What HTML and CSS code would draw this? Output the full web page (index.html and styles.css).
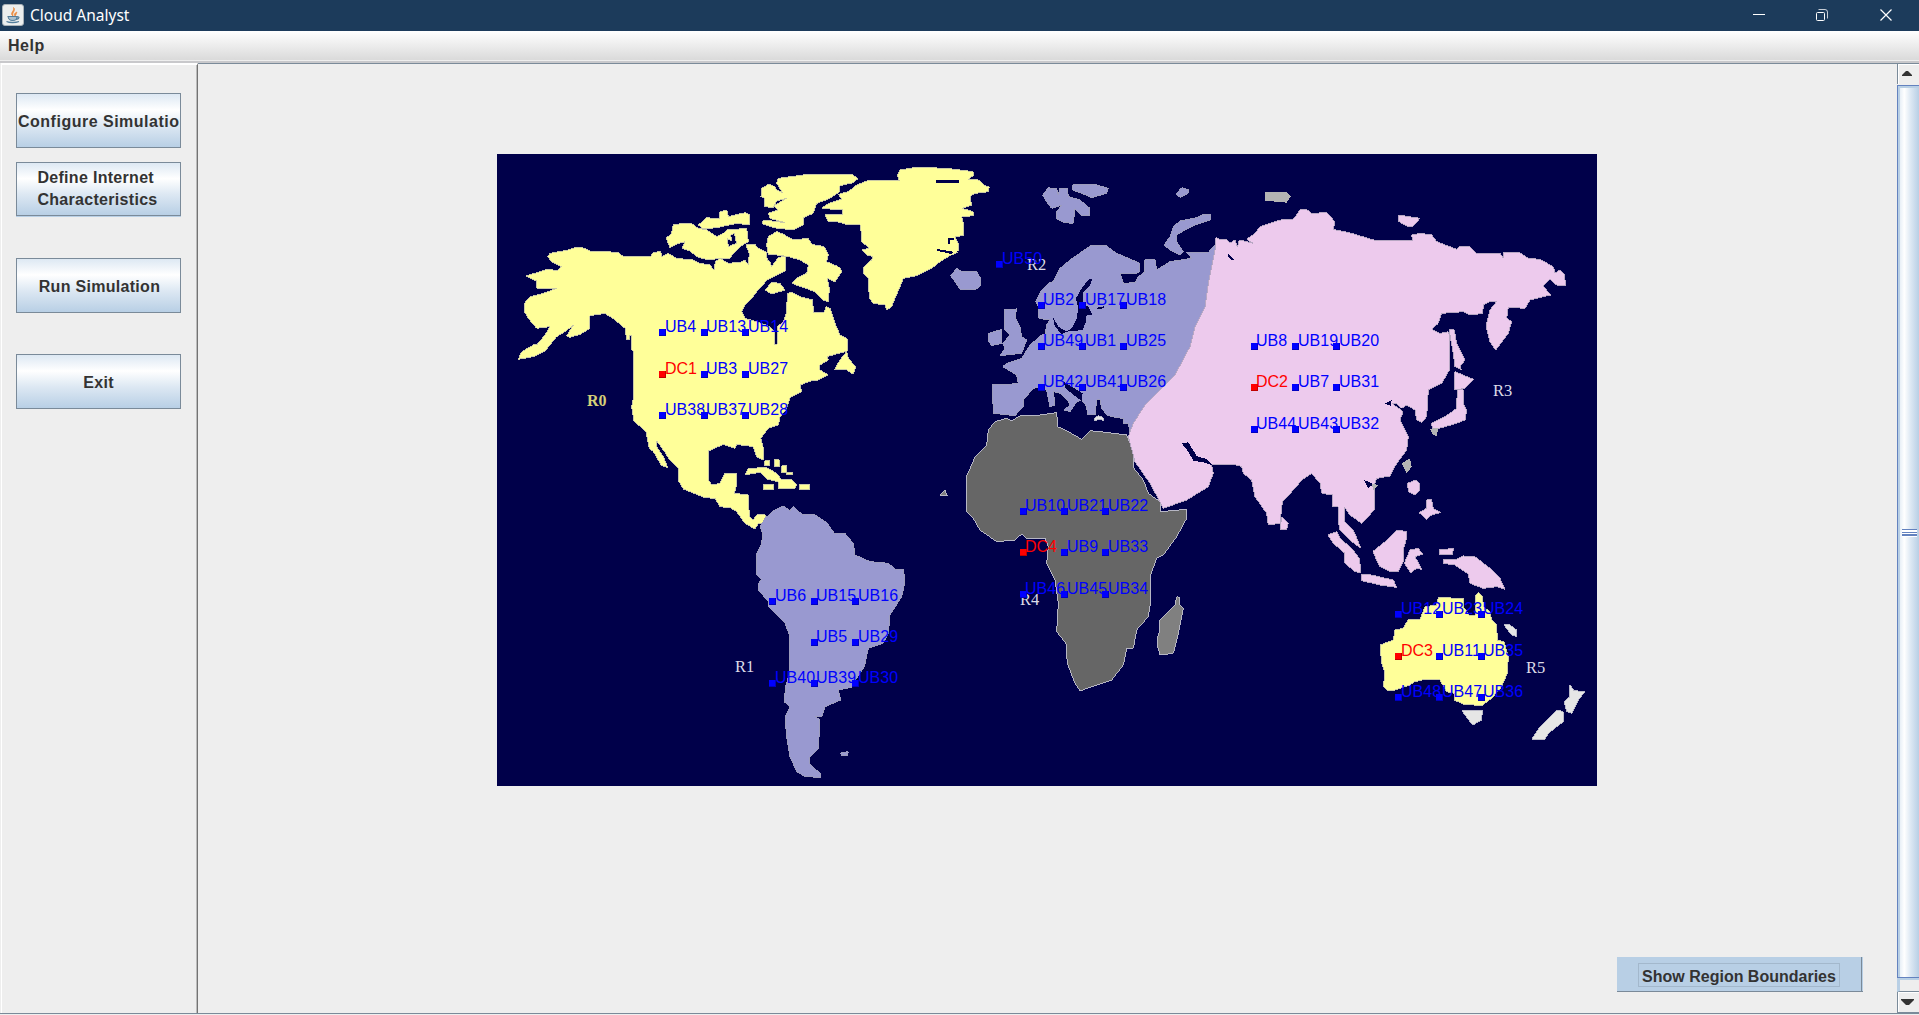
FILE: index.html
```html
<!DOCTYPE html>
<html lang="en">
<head>
<meta charset="utf-8">
<title>Cloud Analyst</title>
<link rel="stylesheet" href="styles.css">
</head>
<body>
<header class="titlebar">
  <svg class="app-icon" width="22" height="22" viewBox="0 0 22 22">
    <rect x=".5" y=".5" width="21" height="21" rx="2.5" fill="#eceeee" stroke="#a9b2b8"/>
    <path d="M11 12C7 9 13 7 11.500 3.500c3 3-2 5-.5 8.500M13 12c-1.500-2 0-3 2-4-1 1.500-.5 2.500-2 4" fill="#ef8d3c" stroke="#e8853b" stroke-width=".7"/>
    <path d="M6 12.500h9c0 3-1 4-4.500 4S6.500 15 6 12.500zM15 13c3-1 2.500 2-.5 2.500M4.500 17.500c3 1.500 9 1.500 12.500 0" fill="#a9bfce" stroke="#537d9b" stroke-width="1.100"/>
  </svg>
  <span class="title">Cloud Analyst</span>
  <svg class="window-controls" width="150" height="31" viewBox="1753 0 150 31" fill="none" stroke="#fff">
    <path d="M1753 14.500h12"/>
    <rect x="1816.500" y="12.500" width="8" height="8" rx="1"/>
    <path d="M1818.500 9.500h6.500q2.500 0 2.500 2.500v6.500" stroke-opacity=".75"/>
    <path d="M1880.500 9.500l11 11M1891.500 9.500l-11 11" stroke-width="1.200"/>
  </svg>
</header>
<nav class="menubar"><span>Help</span></nav>
<main class="workspace">
  <aside class="sidebar">
    <button class="btn">Configure Simulation</button>
    <button class="btn btn-internet"><span>Define Internet<br>Characteristics</span></button>
    <button class="btn btn-run">Run Simulation</button>
    <button class="btn btn-exit">Exit</button>
  </aside>
  <section class="canvas">
    <svg class="map" width="1100" height="632" viewBox="497 154 1100 632">
      <defs>
        <g id="ub"><rect width="7" height="7" fill="#0000c0"/><rect width="6" height="6" fill="#00f"/></g>
        <g id="dc"><rect width="7" height="7" fill="#c00000"/><rect width="6" height="6" fill="#f00"/></g>
      </defs>
      <rect x="497" y="154" width="1100" height="632" fill="#00004a"/>
      <g class="land" transform="translate(490 145) scale(.33333)">
        <!-- North America -->
        <g class="yellow">
          <path d="M173 335 180 325 235 315 262 306 285 310 300 318 385 322 398 333 480 335 492 322 512 320 515 335 535 325 560 340 610 345 630 355 660 360 672 375 676 350 690 340 715 355 750 352 765 345 775 360 778 325 768 300 795 298 805 310 828 320 832 345 840 350 845 365 865 338 885 332 888 350 885 378 850 395 830 405 820 420 800 440 785 460 765 480 755 500 765 520 800 530 840 545 852 560 855 600 862 598 862 545 880 530 890 500 892 445 905 442 930 455 968 465 970 502 1003 502 1008 485 1020 490 1035 535 1050 570 1072 582 1072 618 1010 635 1015 645 990 660 990 675 1015 690 985 705 965 707 930 720 935 740 900 758 888 795 870 815 865 840 835 850 812 880 820 905 820 945 800 935 790 905 740 898 735 910 700 898 655 918 655 1005 665 1020 690 1015 705 985 740 985 740 1020 733 1045 775 1050 778 1115 790 1125 800 1110 825 1110 830 1140 805 1135 795 1152 765 1135 740 1100 720 1088 690 1085 675 1060 645 1058 580 1032 567 1010 565 970 540 945 520 915 500 888 500 905 520 935 533 968 515 962 490 920 478 910 468 860 432 828 425 785 432 750 432 620 425 615 425 570 418 572 418 585 410 585 405 550 375 525 345 505 300 512 300 550 270 568 240 577 230 572 250 540 225 560 200 575 180 600 165 618 130 635 85 643 95 620 130 600 140 600 165 570 180 545 140 550 115 520 103 500 103 475 120 455 160 445 200 430 140 430 140 408 107 393 150 380 175 372 200 378 215 365 185 350Z"/>
          <path fill-rule="evenodd" d="M550 238 605 235 620 248 650 255 680 275 700 265 710 255 770 250 775 290 750 305 730 325 720 340 690 340 655 345 620 335 600 318 575 310 585 290 565 295 540 308 533 290 528 280 545 265ZM712 280 725 288 722 270 733 265 740 295 715 305Z"/>
          <path d="M625 240 650 218 690 222 690 200 710 195 715 215 765 203 778 208 778 240 740 235 680 248 640 252Z"/>
          <path d="M815 130 835 118 850 122 862 135 878 144 860 115 865 100 940 90 1090 90 1103 102 1090 113 1050 122 1050 140 1020 160 980 175 970 205 940 218 940 240 910 255 850 248 815 235 820 225 885 233 840 220 835 205 865 195 852 182 890 160 860 168 850 188 825 185 825 160 813 155Z"/>
          <path d="M835 275 860 260 880 268 910 285 955 280 965 298 1003 305 1015 330 1010 350 1045 365 1057 378 1035 410 1012 400 1018 430 1015 470 1000 465 975 440 905 415 920 400 950 385 955 360 930 345 895 335 860 330 835 330 830 300Z"/>
          <path d="M825 435 845 412 870 415 885 435 845 447ZM1070 620 1075 640 1097 665 1090 688 1070 675 1033 675 1050 645Z"/>
          <path d="M765 990 775 970 830 968 860 985 875 1005 905 1003 920 1020 915 1030 865 1030 865 1010 830 1002 810 982 775 988Z"/>
          <path d="M820 1018h30v17h-30zM930 1018h28v17h-28zM853 945h15v20h-15zM825 948h15v14h-15zM875 963h15v20h-15zM890 982h18v8h-18z"/>
        </g>
        <!-- Greenland -->
        <g class="yellow" transform="translate(1110 0)">
          <path d="M118 108 112 90 120 75 170 67 260 70 340 80 340 92 325 103 355 105 375 122 388 125 385 140 345 145 330 155 335 180 305 190 340 200 342 212 305 215 312 245 310 272 285 275 297 300 295 318 265 335 240 350 215 370 170 392 130 400 118 430 105 460 95 485 80 495 75 480 40 475 28 460 25 400 10 385 12 365 35 345 40 335 20 330 5 315 28 310 5 290 5 268 0 240-40 238-70 230-95 230-105 208-52 208-52 195-115 190-100 178-55 162-65 148-35 140-10 120 20 108Z"/>
          <path class="sea" d="M228 106h70v8h-70zM230 312l50 8-5 7-45-10zM265 278h18v6h-12v14h-6z"/>
        </g>
        <!-- South America -->
        <g class="violet" transform="translate(720 1035)">
          <path d="M80 190 95 160 98 130 90 110 105 85 130 62 160 48 180 62 190 50 215 72 255 75 290 98 315 132 345 130 370 160 375 195 420 215 475 220 500 240 520 238 525 275 515 320 480 375 475 430 460 460 415 475 403 530 380 565 365 592 325 600 332 630 285 650 275 680 255 680 270 690 265 775 240 800 238 820 270 850 272 862 225 860 200 845 180 800 170 740 165 680 180 650 162 635 168 585 180 545 180 440 165 400 115 350 115 335 85 300 85 280 95 268 80 255Z"/>
          <path d="M332 788 355 785 353 795 335 797Z"/>
        </g>
        <!-- Europe -->
        <g class="violet" transform="translate(1110 0)">
          <path d="M548 150 565 128 590 132 595 150 600 130 622 130 625 155 660 165 690 190 690 212 665 212 645 192 640 235 615 233 590 222 590 200 605 180 575 190 565 178ZM638 120 700 117 745 130 740 145 695 158 665 145 638 135ZM947 148 965 128 987 135 985 145 960 157Z"/>
          <path d="M912 300 930 275 940 245 960 228 1010 218 1030 208 1053 208 1050 225 1010 238 975 255 950 270 950 290 970 320 960 330 930 315Z"/>
          <path d="M272 392 290 370 305 380 350 380 362 400 360 425 345 435 300 433 285 410ZM432 495 470 492 465 515 480 545 485 575 500 585 485 625 420 632 435 610 428 595 450 570 435 555ZM387 565 425 553 425 595 395 602 387 590Z"/>
          <path d="M527 470 545 435 565 415 580 410 600 370 630 345 690 303 740 303 770 325 840 355 840 380 830 385 780 385 790 415 825 413 835 395 855 380 855 345 885 345 890 375 930 350 995 340 980 322 1045 322 1065 300 1075 300 1100 600 812 870 805 835 790 835 790 820 770 818 740 810 725 790 720 765 710 765 705 810 683 810 680 785 665 765 650 770 630 800 612 795 630 780 625 770 600 745 580 740 585 780 570 785 560 735 545 725 520 730 490 765 490 785 465 812 400 805 397 720 445 718 475 715 470 690 428 665 440 655 485 640 510 600 545 570 555 570 560 540 570 525 537 520 537 490Z"/>
          <path class="sea" d="M697 400 690 420 668 445 668 475 685 485 697 510 680 510 678 530 668 555 618 560 635 550 650 520 655 490 648 460 665 430 685 405ZM578 515 595 545 620 560 605 567 585 545ZM610 710 668 745 665 768 618 732ZM710 488 733 484 730 490 712 493Z"/>
          <path class="white" d="M703 828 705 818 715 812 730 818 732 828 718 822Z"/>
        </g>
        <!-- Africa -->
        <g class="gray" transform="translate(1320 765)">
          <path d="M110 228 125 195 135 170 170 135 175 90 195 65 230 55 245 62 270 48 330 45 380 38 383 80 410 92 455 118 480 92 510 95 590 105 600 130 612 170 612 205 640 240 655 280 690 305 692 335 770 328 770 355 740 410 700 465 680 475 660 530 663 600 655 650 620 690 610 745 590 745 580 795 545 840 500 855 450 873 435 850 412 790 408 730 380 695 385 610 375 540 350 490 355 440 345 415 290 415 275 402 255 420 200 425 150 390 130 355 110 335Z"/>
          <path class="midgray" d="M690 660 735 615 740 590 748 592 750 615 760 625 745 700 730 760 690 765 683 740 683 710 690 690ZM30 285 45 270 52 288Z"/>
        </g>
        <!-- Asia -->
        <g class="pink" transform="translate(1890 135)">
          <path d="M287 143 300 148 320 150 330 160 345 150 352 172 358 150 380 155 400 160 380 148 405 130 420 110 455 98 490 88 520 88 540 60 560 58 575 70 620 68 645 95 640 118 695 130 760 150 878 152 875 135 900 130 935 135 950 155 1010 178 1020 168 1050 170 1070 192 1140 190 1150 205 1150 187 1200 188 1225 205 1260 208 1300 230 1305 250 1320 240 1332 252 1338 288 1310 285 1290 268 1270 288 1292 315 1230 330 1215 355 1165 352 1160 385 1175 395 1165 430 1127 480 1110 455 1098 410 1110 360 1130 335 1110 335 1090 345 1088 370 1050 375 1030 365 965 370 955 400 935 418 960 430 985 425 990 440 988 540 965 580 925 600 920 680 905 697 890 690 885 660 860 645 845 655 830 640 815 640 850 665 840 690 865 740 860 780 830 820 810 858 770 865 763 885 763 960 725 1000 690 975 672 950 675 995 700 1020 723 1075 695 1055 660 1020 655 995 655 950 638 950 638 915 605 910 600 880 575 850 545 870 525 895 487 935 480 1000 445 1005 440 970 405 920 395 870 370 850 365 830 340 822 275 825 280 850 265 890 200 930 130 955 125 945 90 880 45 815 25 740 40 700 75 645 165 555 210 470 225 410 255 350 265 280 285 180Z"/>
          <path class="sea" d="M185 760 205 757 230 798 262 808 280 828 255 818 220 812 205 785ZM795 640 815 630 812 648ZM732 870 760 882 745 895ZM325 190 342 210 336 212 325 200Z"/>
          <path d="M485 980 505 1000 500 1018 480 1020ZM835 75 900 85 880 108 865 110 837 95ZM987 420 1003 420 1010 460 1035 510 1020 530 1025 540 1005 530 1000 490ZM1005 545 1060 568 1035 595 1005 600ZM1012 598 1030 600 1030 640 1040 660 1035 690 1010 700 940 720 933 700 975 680 1010 655Z"/>
          <path d="M863 880 885 870 900 880 900 900 885 915 865 905ZM920 930 935 930 940 955 962 968 935 975 920 988 897 968 920 955Z"/>
          <path class="lightgray" d="M435 5 500 5 512 20 500 38 435 32ZM930 718 955 712 950 738 940 735ZM845 820 870 805 875 830 860 850ZM755 880 775 885 760 900Z"/>
        </g>
        <!-- Indonesia, Australia and New Zealand -->
        <g class="pink" transform="translate(2430 1065)">
          <path d="M83 105 110 95 120 115 155 145 178 175 183 218 165 215 135 190 135 160 100 130ZM183 225 200 222 280 240 290 262 240 255 185 242ZM218 155 255 125 290 90 320 95 318 120 310 150 312 180 295 215 270 215 240 200ZM313 190 330 150 355 145 368 162 345 170 365 208 350 205 332 218ZM430 180 470 178 490 168 525 170 570 205 600 235 615 268 590 260 550 265 510 250 505 222 465 195 430 190ZM418 150 460 145 458 163 420 165Z"/>
          <path class="yellow" d="M240 435 280 420 285 390 310 385 325 358 360 358 375 320 410 315 415 293 490 295 490 320 510 348 525 345 528 285 535 278 548 290 550 320 570 335 575 360 590 375 592 420 612 425 625 470 622 520 605 560 575 595 545 617 490 612 462 600 465 580 440 575 420 540 375 538 345 545 330 555 285 570 265 573 250 560 255 520 245 490Z"/>
          <path class="white" d="M485 632 548 632 543 662 518 675ZM612 375 630 375 650 390 650 410 635 405ZM810 555 822 572 855 575 835 600 815 640 800 635 792 605 810 590ZM770 630 790 635 790 665 745 700 735 718 695 718 720 680Z"/>
        </g>
      </g>
      <g class="region">
        <text class="region-r0" x="587" y="406">R0</text><text x="735" y="672">R1</text><text x="1027" y="270">R2</text>
        <text x="1493" y="396">R3</text><text x="1020" y="605">R4</text><text x="1526" y="673">R5</text>
      </g>
      <g class="node">
        <use href="#ub" x="659" y="329"/><text x="665" y="332">UB4</text>
        <use href="#ub" x="701" y="329"/><text x="706" y="332">UB13</text>
        <use href="#ub" x="742" y="329"/><text x="748" y="332">UB14</text>
        <use href="#dc" x="659" y="371"/><text class="dc" x="665" y="374">DC1</text>
        <use href="#ub" x="701" y="371"/><text x="706" y="374">UB3</text>
        <use href="#ub" x="742" y="371"/><text x="748" y="374">UB27</text>
        <use href="#ub" x="659" y="412"/><text x="665" y="415">UB38</text>
        <use href="#ub" x="701" y="412"/><text x="706" y="415">UB37</text>
        <use href="#ub" x="742" y="412"/><text x="748" y="415">UB28</text>

        <use href="#ub" x="769" y="598"/><text x="775" y="601">UB6</text>
        <use href="#ub" x="811" y="598"/><text x="816" y="601">UB15</text>
        <use href="#ub" x="852" y="598"/><text x="858" y="601">UB16</text>
        <use href="#ub" x="811" y="639"/><text x="816" y="642">UB5</text>
        <use href="#ub" x="852" y="639"/><text x="858" y="642">UB29</text>
        <use href="#ub" x="769" y="680"/><text x="775" y="683">UB40</text>
        <use href="#ub" x="811" y="680"/><text x="816" y="683">UB39</text>
        <use href="#ub" x="852" y="680"/><text x="858" y="683">UB30</text>

        <use href="#ub" x="996" y="261"/><text x="1002" y="264">UB50</text>
        <use href="#ub" x="1038" y="302"/><text x="1043" y="305">UB2</text>
        <use href="#ub" x="1079" y="302"/><text x="1085" y="305">UB17</text>
        <use href="#ub" x="1120" y="302"/><text x="1126" y="305">UB18</text>
        <use href="#ub" x="1038" y="343"/><text x="1043" y="346">UB49</text>
        <use href="#ub" x="1079" y="343"/><text x="1085" y="346">UB1</text>
        <use href="#ub" x="1120" y="343"/><text x="1126" y="346">UB25</text>
        <use href="#ub" x="1038" y="384"/><text x="1043" y="387">UB42</text>
        <use href="#ub" x="1079" y="384"/><text x="1085" y="387">UB41</text>
        <use href="#ub" x="1120" y="384"/><text x="1126" y="387">UB26</text>

        <use href="#ub" x="1020" y="508"/><text x="1025" y="511">UB10</text>
        <use href="#ub" x="1061" y="508"/><text x="1067" y="511">UB21</text>
        <use href="#ub" x="1102" y="508"/><text x="1108" y="511">UB22</text>
        <use href="#dc" x="1020" y="549"/><text class="dc" x="1025" y="552">DC4</text>
        <use href="#ub" x="1061" y="549"/><text x="1067" y="552">UB9</text>
        <use href="#ub" x="1102" y="549"/><text x="1108" y="552">UB33</text>
        <use href="#ub" x="1020" y="591"/><text x="1025" y="594">UB46</text>
        <use href="#ub" x="1061" y="591"/><text x="1067" y="594">UB45</text>
        <use href="#ub" x="1102" y="591"/><text x="1108" y="594">UB34</text>

        <use href="#ub" x="1251" y="343"/><text x="1256" y="346">UB8</text>
        <use href="#ub" x="1292" y="343"/><text x="1298" y="346">UB19</text>
        <use href="#ub" x="1333" y="343"/><text x="1339" y="346">UB20</text>
        <use href="#dc" x="1251" y="384"/><text class="dc" x="1256" y="387">DC2</text>
        <use href="#ub" x="1292" y="384"/><text x="1298" y="387">UB7</text>
        <use href="#ub" x="1333" y="384"/><text x="1339" y="387">UB31</text>
        <use href="#ub" x="1251" y="426"/><text x="1256" y="429">UB44</text>
        <use href="#ub" x="1292" y="426"/><text x="1298" y="429">UB43</text>
        <use href="#ub" x="1333" y="426"/><text x="1339" y="429">UB32</text>

        <use href="#ub" x="1395" y="611"/><text x="1401" y="614">UB12</text>
        <use href="#ub" x="1436" y="611"/><text x="1442" y="614">UB23</text>
        <use href="#ub" x="1478" y="611"/><text x="1483" y="614">UB24</text>
        <use href="#dc" x="1395" y="653"/><text class="dc" x="1401" y="656">DC3</text>
        <use href="#ub" x="1436" y="653"/><text x="1442" y="656">UB11</text>
        <use href="#ub" x="1478" y="653"/><text x="1483" y="656">UB35</text>
        <use href="#ub" x="1395" y="694"/><text x="1401" y="697">UB48</text>
        <use href="#ub" x="1436" y="694"/><text x="1442" y="697">UB47</text>
        <use href="#ub" x="1478" y="694"/><text x="1483" y="697">UB36</text>
      </g>
    </svg>
    <button class="btn-regions"><span>Show Region Boundaries</span></button>
  </section>
  <div class="scrollbar">
    <div class="arrow"><svg width="10" height="5" viewBox="0 0 10 5"><path d="M0 5V4L4 0h2l4 4v1z" fill="#333"/></svg></div>
    <div class="thumb"><div class="grip"></div></div>
    <div class="track"></div>
    <div class="arrow arrow-down"><svg width="13" height="6" viewBox="0 0 13 6"><path d="M0 0h13v1L8 6H5L0 1z" fill="#333"/></svg></div>
  </div>
</main>
</body>
</html>
```
FILE: styles.css
```css
* { box-sizing: border-box; }
body {
  margin: 0;
  height: 1015px;
  display: flex;
  flex-direction: column;
  overflow: hidden;
  background: #eee;
  color: #333;
  font: bold 16px/22px "Liberation Sans", Arial, sans-serif;
  letter-spacing: .25px;
}
.titlebar {
  height: 31px;
  display: flex;
  align-items: center;
  background: #1c3b5b;
  color: #fff;
}
.app-icon { margin: -2px 6px 0 2px; }
.title { font: 400 15.5px/28px "Noto Sans", sans-serif; letter-spacing: 0; padding-bottom: 1px; }
.window-controls { margin-left: auto; margin-right: 16px; }
.menubar {
  height: 32px;
  padding: 4px 8px;
  background: linear-gradient(#fff, #dadada 29px, #eee 29px, #eee 30px, #c8c8cb 30px);
  letter-spacing: .5px;
}
.workspace {
  flex: 1;
  min-height: 0;
  display: flex;
  margin-bottom: 1px;
  border-bottom: 1px solid #7a8a99;
}
.sidebar {
  width: 197px;
  display: flex;
  flex-direction: column;
  padding: 28px 14px 0 14px;
  margin-left: 1px;
  border-left: 1px solid #fff;
  border-top: 2px solid #fff;
  border-right: 1px solid #737373;
  box-shadow: inset -1px 0 #bbb;
}
.btn {
  width: 165px;
  height: 55px;
  flex: none;
  padding: 2px 0 0;
  border: 1px solid #7a8a99;
  background: linear-gradient(#dde8f3, #fff 30%, #dde8f3 60%, #b8cfe5);
  color: #333;
  font: inherit;
  letter-spacing: .3px;
  white-space: nowrap;
  overflow: hidden;
  display: flex;
  align-items: center;
  justify-content: center;
}
.btn:first-child { justify-content: flex-start; padding-left: 1px; letter-spacing: .5px; }
.btn-internet { height: 54px; margin-top: 14px; text-align: left; box-shadow: 0 1px #b8cfe5; padding: 0 2px 0 0; }
.btn-run { margin-top: 42px; padding-left: 2px; }
.btn-exit { margin-top: 41px; }
.canvas {
  flex: 1;
  display: flex;
  flex-direction: column;
  border-top: 1px solid #7a8a99;
  padding-top: 90px;
}
.map { margin-left: 299px; flex: none; display: block; }
.land path { shape-rendering: crispEdges; stroke-width: 3; }
.land .yellow { fill: #ffff99; stroke: #c9c9a6; }
.land .violet { fill: #9999d0; stroke: #9c9cbc; }
.land .pink { fill: #edcaed; stroke: #b7a7c3; }
.land .gray { fill: #666; stroke: #b6b6c4; }
.land .midgray { fill: #808080; }
.land .lightgray { fill: #b4b4b4; stroke: none; }
.land .white { fill: #e6e6e6; stroke: #b8b8c8; }
.land .sea { fill: #00004a; stroke: none; }
.region { font: 400 16.5px "Liberation Serif", "Times New Roman", serif; fill: #dcdce8; letter-spacing: 0; }
.region-r0 { font-weight: 700; fill: #d5cf78; font-size: 16px; }
.node { font: 400 16px "Liberation Sans", Arial, sans-serif; fill: #00f; letter-spacing: 0; }
.dc { fill: #f00; }
.btn-regions {
  align-self: flex-end;
  margin: 171px 34px 0 0;
  width: 246px;
  height: 35px;
  padding: 5px 21px 5px 21px;
  border: 0;
  background: #b8cfe5;
  box-shadow: inset 0 -1px #7a8a99, inset -1px 0 #b8cfe5, inset -2px 0 #7a8a99;
  color: #333;
  font: inherit;
}
.btn-regions span {
  display: block;
  width: 202px;
  height: 24px;
  border: 1px solid #a3b8cc;
  padding-top: 2px;
  white-space: nowrap;
}
.scrollbar {
  width: 22px;
  display: flex;
  flex-direction: column;
  border-top: 1px solid #7a8a99;
}
.arrow {
  height: 20px;
  flex: none;
  border-left: 1px solid #7a8a99;
  box-shadow: inset 1px 1px #fff;
  padding: 7px 0 0 4px;
  line-height: 0;
}
.thumb {
  margin-top: 1px;
  height: 893px;
  border: 1px solid #6382bf;
  border-right: 0;
  box-shadow: inset 2px 2px #b8cfe5;
  background: linear-gradient(90deg, #dde8f3, #fff 30%, #dde8f3 60%, #b8cfe5);
  padding: 443px 0 0 4px;
}
.grip {
  width: 15px;
  height: 8px;
  background: linear-gradient(#6382bf 1px, #fff 1px, #fff 3px, #6382bf 3px, #6382bf 4px, #fff 4px, #fff 5px, #6382bf 5px, #6382bf 7px, #fff 7px);
}
.track { flex: 1; border-left: 3px solid #b8cfe5; border-top: 2px solid #b8cfe5; border-bottom: 1px solid #7a8a99; }
.arrow-down { height: 21px; padding: 7px 0 0 3px; border-bottom: 1px solid #7a8a99; }
```
